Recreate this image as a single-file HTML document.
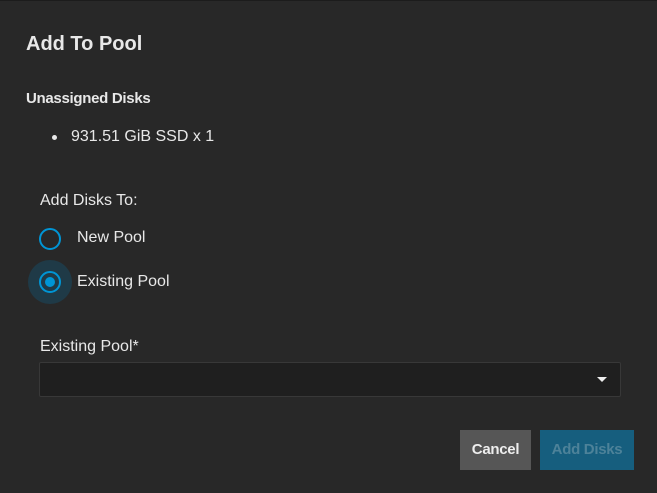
<!DOCTYPE html>
<html><head><style>
body{margin:0;width:657px;height:493px;background:#282828;font-family:"Liberation Sans",sans-serif;color:#e8e8e8;position:relative;overflow:hidden}
.top{position:absolute;left:0;top:0;width:657px;height:1px;background:#1c1c1c}
.a{position:absolute;white-space:nowrap}
.radio{position:absolute;width:22px;height:22px;border:2px solid #0095d5;border-radius:50%;box-sizing:border-box}
</style></head><body>
<div class="top"></div>
<div class="a" style="left:26px;top:33px;font-size:20px;font-weight:bold">Add To Pool</div>
<div class="a" style="left:26px;top:90px;font-size:15px;font-weight:bold;letter-spacing:-0.3px">Unassigned Disks</div>
<div class="a" style="left:52px;top:135px;width:5px;height:5px;border-radius:50%;background:#e8e8e8"></div>
<div class="a" style="left:71px;top:128px;font-size:16px">931.51 GiB SSD x 1</div>
<div class="a" style="left:40px;top:192px;font-size:16px">Add Disks To:</div>
<div class="radio" style="left:39px;top:228px"></div>
<div class="a" style="left:77px;top:229px;font-size:16px">New Pool</div>
<div class="a" style="left:28px;top:260px;width:44px;height:44px;border-radius:50%;background:#1f3a47"></div>
<div class="radio" style="left:39px;top:271px"></div>
<div class="a" style="left:45px;top:277px;width:10px;height:10px;border-radius:50%;background:#0095d5"></div>
<div class="a" style="left:77px;top:273px;font-size:16px">Existing Pool</div>
<div class="a" style="left:40px;top:338px;font-size:16px">Existing Pool*</div>
<div class="a" style="left:39px;top:362px;width:580px;height:33px;background:#1f1f1f;border:1px solid #383838;border-radius:2px"></div>
<div class="a" style="left:597px;top:377px;width:0;height:0;border-left:5px solid transparent;border-right:5px solid transparent;border-top:5px solid #eee"></div>
<div class="a" style="left:460px;top:430px;width:71px;height:40px;background:#565656;color:#eee;font-size:15px;font-weight:bold;text-align:center;line-height:40px;letter-spacing:-0.3px">Cancel</div>
<div class="a" style="left:540px;top:430px;width:94px;height:40px;background:#165e7e;color:#4d8299;font-size:15px;font-weight:bold;text-align:center;line-height:40px;letter-spacing:-0.3px">Add Disks</div>
</body></html>
